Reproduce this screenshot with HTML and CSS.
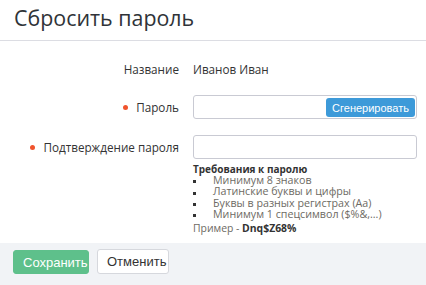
FILE: index.html
```html
<!DOCTYPE html>
<html lang="ru">
<head>
<meta charset="utf-8">
<link rel="stylesheet" href="styles.css">
</head>
<body>
<div class="page">
  <div class="header"><h1 class="title">Сбросить пароль</h1></div>
  <div class="form">
    <div class="row row-name">
      <div class="label">Название</div>
      <div class="value">Иванов Иван</div>
    </div>
    <div class="row row-pass">
      <div class="label"><span class="req"></span>Пароль</div>
      <div class="field">
        <div class="input input-gen"><button class="gen" type="button">Сгенерировать</button></div>
      </div>
    </div>
    <div class="row row-confirm">
      <div class="label"><span class="req"></span>Подтверждение пароля</div>
      <div class="field">
        <div class="input"></div>
        <div class="rules">
          <div class="rules-title">Требования к паролю</div>
          <ul class="rules-list">
            <li>Минимум 8 знаков</li>
            <li>Латинские буквы и цифры</li>
            <li>Буквы в разных регистрах (Aa)</li>
            <li>Минимум 1 спецсимвол ($%&amp;,...)</li>
          </ul>
          <div class="example">Пример - <b>Dnq$Z68%</b></div>
        </div>
      </div>
    </div>
  </div>
  <div class="footer">
    <button class="btn btn-save" type="button">Сохранить</button>
    <button class="btn btn-cancel" type="button">Отменить</button>
  </div>
</div>
</body>
</html>
```
FILE: styles.css
```css
* { box-sizing: border-box; }
html, body { margin: 0; padding: 0; background: #fff; }
body {
  font-family: "Open Sans", "DejaVu Sans", sans-serif;
  font-size: 11.7px;
  color: #333;
  width: 426px;
  height: 285px;
  overflow: hidden;
}
.page { display: flex; flex-direction: column; height: 285px; }
.header {
  height: 41px;
  border-bottom: 1px solid #dcdde3;
  padding: 4px 14px 0;
}
.title {
  margin: 0;
  font-size: 21.4px;
  font-weight: 400;
  line-height: 28px;
  color: #2f3338;
}
.form { flex: 1; padding-top: 19px; }
.row {
  display: grid;
  grid-template-columns: 179px 224px;
  column-gap: 14px;
  align-items: start;
}
.label {
  text-align: right;
  line-height: 18px;
  display: flex;
  justify-content: flex-end;
  align-items: center;
}
.value { line-height: 18px; }
.row-pass { margin-top: 17px; }
.row-pass .label { height: 24px; }
.row-confirm { margin-top: 16px; }
.row-confirm .label { height: 24px; }
.req {
  width: 5px;
  height: 5px;
  border-radius: 50%;
  background: #f0542d;
  margin-right: 8px;
}
.input {
  height: 24px;
  border: 1px solid #c9cad3;
  border-radius: 3px;
  background: #fff;
}
.input-gen {
  display: flex;
  justify-content: flex-end;
  align-items: center;
  padding-right: 1px;
}
.gen {
  font-family: "Liberation Sans", Arial, sans-serif;
  font-size: 11px;
  color: #fff;
  background: #3d9ad9;
  border: 0;
  border-radius: 3px;
  height: 19px;
  width: 89px;
  padding: 0;
  margin-top: 1px;
}
.rules { padding-top: 5px; }
.rules-title {
  font-weight: 700;
  font-size: 10px;
  line-height: 11px;
  color: #333;
}
.rules-list {
  margin: 0;
  padding: 0;
  list-style: none;
  font-size: 10.7px;
  line-height: 11.4px;
  color: #6d6a63;
}
.rules-list li { display: flex; align-items: center; }
.rules-list li::before {
  content: "";
  width: 3px;
  height: 3px;
  background: #333;
  margin-right: 17px;
  margin-top: 2px;
  flex: none;
}
.example {
  margin-top: 1px;
  font-size: 10.4px;
  line-height: 13px;
  color: #6d6a63;
}
.example b { color: #333; }
.footer {
  height: 42px;
  background: #f1f3f6;
  display: flex;
  align-items: flex-start;
  gap: 8px;
  padding: 6px 13px 0;
}
.btn {
  font-family: "Liberation Sans", Arial, sans-serif;
  font-size: 13px;
  height: 25px;
  border-radius: 3px;
  padding: 0 9px;
}
.btn-save {
  background: #5ec08b;
  color: #fff;
  border: 1px solid #5ec08b;
  width: 76px;
  margin-top: 1px;
  height: 24px;
}
.btn-cancel {
  background: #fff;
  color: #333;
  border: 1px solid #d6d8dd;
  width: 72px;
}
```
